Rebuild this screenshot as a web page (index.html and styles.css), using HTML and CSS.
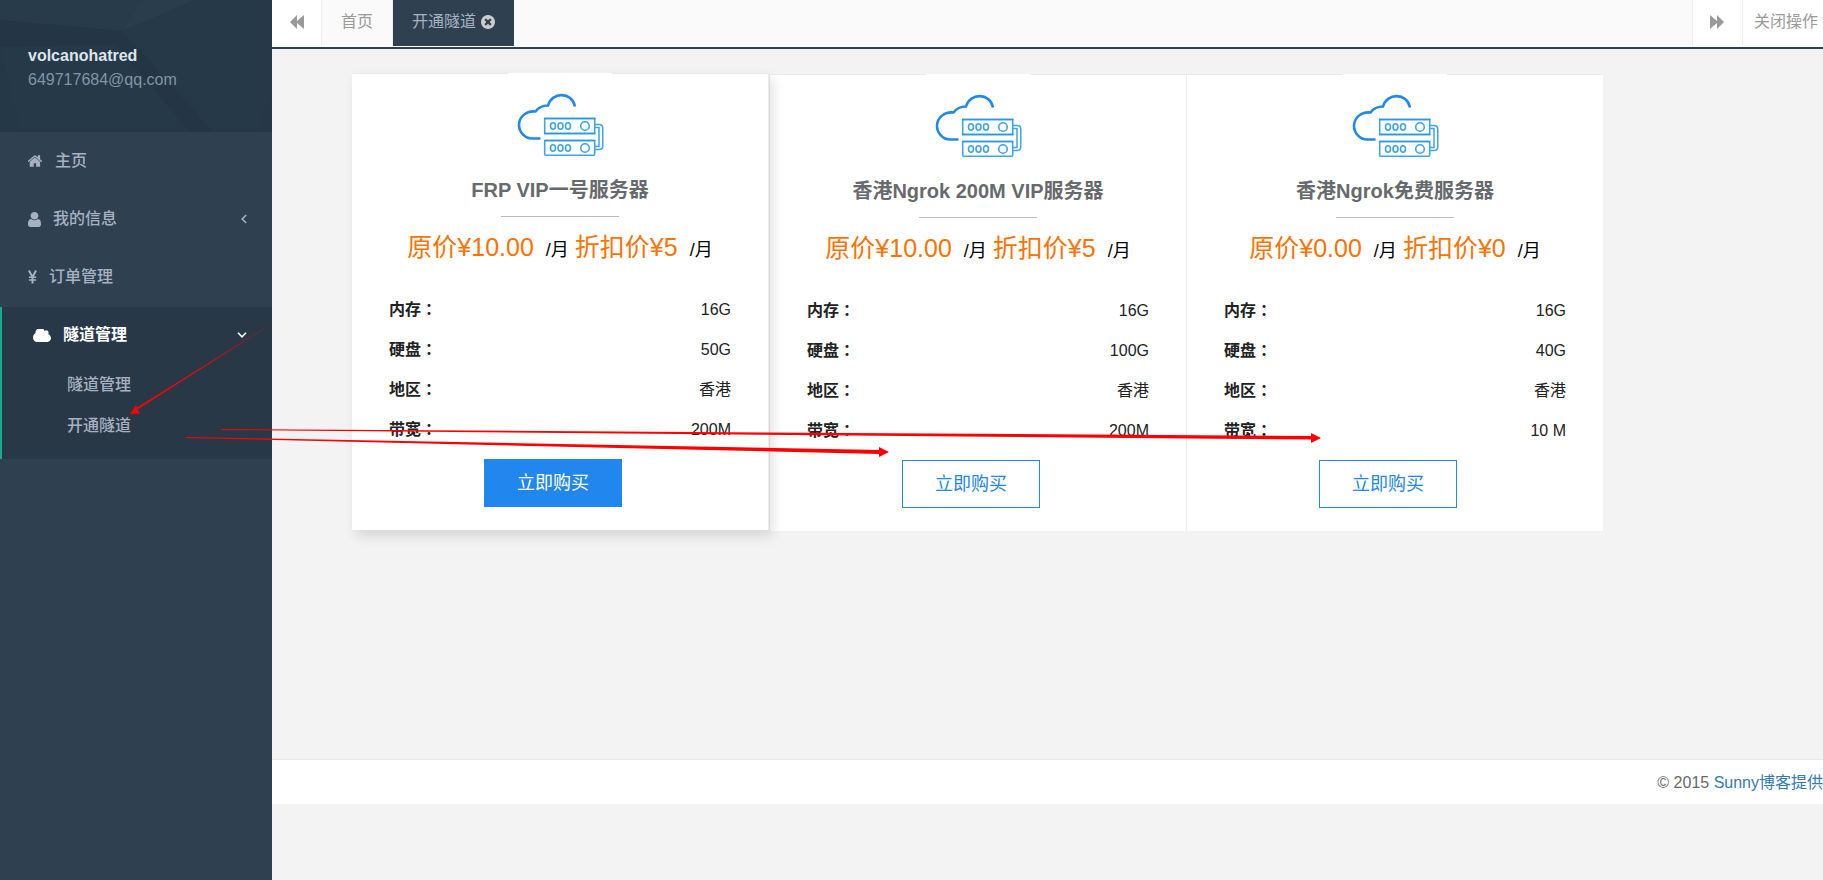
FILE: index.html
```html
<!DOCTYPE html>
<html lang="zh-CN">
<head>
<meta charset="utf-8">
<title>开通隧道</title>
<link rel="stylesheet" href="styles.css">
</head>
<body>
<svg class="defs" aria-hidden="true">
  <symbol id="server" viewBox="9 -12 104 90">
    <g fill="none" stroke="#2189ec" stroke-width="2.6" stroke-linecap="round">
      <path d="M76 21.500C73 6.500 53 6.500 49 20.500Q41 20.500 36.500 26.500C27 25.500 20 32 20 40C20 47 26 53.500 33 53.500H41.500" stroke-linecap="butt"/>
    </g>
    <g fill="none" stroke="#3fa4e8" stroke-width="1.600">
      <rect x="45.700" y="33.500" width="50" height="15"/>
      <rect x="45.700" y="55.500" width="50" height="14.700" rx="1"/>
      <path d="M45 33.500H96.500M45 48.500H96.500M45 55.500H96.500" stroke="#2b97e4"/>
      <ellipse cx="54" cy="41" rx="2.500" ry="3.200"/><ellipse cx="61.500" cy="41" rx="2.500" ry="3.200"/><ellipse cx="69" cy="41" rx="2.500" ry="3.200"/>
      <circle cx="86" cy="41" r="4.300"/>
      <ellipse cx="54" cy="63" rx="2.500" ry="3.200"/><ellipse cx="61.500" cy="63" rx="2.500" ry="3.200"/><ellipse cx="69" cy="63" rx="2.500" ry="3.200"/>
      <circle cx="86" cy="63" r="4.300"/>
      <path d="M96 39.500H100Q103.800 39.500 103.800 43V61Q103.800 64.500 100 64.500H96M96 42.500H100V61.500H96" stroke-width="1.500"/>
    </g>
  </symbol>
</svg>
<div class="app">
  <aside class="sidebar">
    <header class="profile">
      <svg class="profile-bg" viewBox="0 0 272 132" preserveAspectRatio="none" aria-hidden="true">
        <path fill="#283b4a" d="M0 0H143L122 31L0 20Z"/>
        <path fill="#293d4c" d="M143 0H195L122 31Z"/>
        <path fill="#243645" d="M0 20L122 31L140 50L213 132H190L148 82L115 45L0 47Z"/>
        <path fill="#253847" d="M0 47L22 132H0Z"/>
        <path fill="#253847" d="M272 95L256 132H272Z"/>
      </svg>
      <strong class="profile-name">volcanohatred</strong>
      <span class="profile-mail">649717684@qq.com</span>
    </header>
    <nav>
      <a class="nav-link" href="#"><svg width="15" height="14" viewBox="64 190 1664 1400" fill="currentColor"><path d="M1408 992v480q0 26-19 45t-45 19h-384v-384h-256v384h-384q-26 0-45-19t-19-45v-480q0-1 .5-3t.5-3l575-474 575 474q1 2 1 6zm223-69l-62 74q-8 9-21 11h-3q-13 0-21-7l-692-577-692 577q-12 8-24 7-13-2-21-11l-62-74q-8-10-7-23.500t11-21.500l719-599q32-26 76-26t76 26l244 204v-195q0-14 9-23t23-9h192q14 0 23 9t9 23v408l219 182q10 8 11 21.500t-7 23.500z"/></svg>主页</a>
      <a class="nav-link" href="#"><svg width="13" height="15" viewBox="256 128 1280 1536" preserveAspectRatio="none" fill="currentColor"><path d="M1536 1399q0 109-62.500 187t-150.500 78h-854q-88 0-150.500-78t-62.500-187q0-85 8.500-160.500t31.500-152 58.500-131 94-89 134.500-34.500q131 128 313 128t313-128q76 0 134.500 34.500t94 89 58.500 131 31.500 152 8.500 160.500zm-256-887q0 159-112.500 271.500t-271.500 112.500-271.500-112.500-112.500-271.500 112.500-271.500 271.500-112.500 271.500 112.500 112.500 271.500z"/></svg>我的信息<svg class="chevron" width="6" height="10" viewBox="0 0 6 10" fill="none" stroke="currentColor" stroke-width="1.600"><path d="M5.200 1L1.200 5L5.200 9"/></svg></a>
      <a class="nav-link" href="#"><svg width="9" height="14" viewBox="0 0 10 14" preserveAspectRatio="none" fill="none" stroke="currentColor" stroke-width="2.200"><path d="M1 .5L5 7L9 .5M5 6.500V13.500"/><path d="M1 7.300H9M1 9.900H9" stroke-width="1.500"/></svg>订单管理</a>
      <div class="nav-group">
        <a class="nav-link nav-link-active" href="#"><svg width="18" height="13" viewBox="64 256 1920 1280" preserveAspectRatio="none" fill="currentColor"><path d="M1984 1152q0 159-112.500 271.500t-271.500 112.500h-1088q-185 0-316.500-131.500t-131.500-316.500q0-132 71-241.500t187-163.500q-2-28-2-43 0-212 150-362t362-150q158 0 286.500 88t187.500 230q70-62 166-62 106 0 181 75t75 181q0 75-41 138 129 30 213 134.500t84 239.500z"/></svg>隧道管理<svg class="chevron" width="10" height="6" viewBox="0 0 10 6" fill="none" stroke="currentColor" stroke-width="1.600"><path d="M1 .8L5 4.800L9 .8"/></svg></a>
        <a class="sub-link" href="#">隧道管理</a>
        <a class="sub-link" href="#">开通隧道</a>
      </div>
    </nav>
  </aside>
  <main class="main">
    <div class="tabs">
      <button class="roll roll-left" type="button" aria-label="向左"><svg width="15" height="14" viewBox="0 0 15 14" fill="currentColor"><path d="M0 7L7 0V6L14 0V14L7 8V14Z"/></svg></button>
      <div class="tab-list">
        <a class="tab" href="#">首页</a>
        <a class="tab tab-active" href="#">开通隧道<svg width="14" height="14" viewBox="128 128 1536 1536" fill="#ccc"><path d="M1277 1122q0-26-19-45l-181-181 181-181q19-19 19-45 0-27-19-46l-90-90q-19-19-46-19-26 0-45 19l-181 181-181-181q-19-19-45-19-27 0-46 19l-90 90q-19 19-19 46 0 26 19 45l181 181-181 181q-19 19-19 45 0 27 19 46l90 90q19 19 46 19 26 0 45-19l181-181 181 181q19 19 45 19 27 0 46-19l90-90q19-19 19-46zm387-226q0 209-103 385.500t-279.500 279.500-385.500 103-385.500-103-279.500-279.500-103-385.500 103-385.500 279.500-279.500 385.500-103 385.500 103 279.500 279.500 103 385.500z"/></svg></a>
      </div>
      <button class="roll roll-right" type="button" aria-label="向右"><svg width="15" height="14" viewBox="0 0 15 14" fill="currentColor"><path d="M14 7L7 0V6L0 0V14L7 8V14Z"/></svg></button>
      <button class="roll close-menu" type="button">关闭操作<svg width="8" height="5" viewBox="0 0 8 5" fill="currentColor"><path d="M0 0H8L4 5Z"/></svg></button>
    </div>
    <div class="content">
      <section class="plans">
        <article class="plan plan-active">
          <svg class="plan-icon"><use href="#server"/></svg>
          <h2 class="plan-title">FRP VIP一号服务器</h2>
          <hr class="plan-rule">
          <p class="plan-price"><span class="amount">原价¥10.00</span><span class="unit">/月</span><span class="amount">折扣价¥5</span><span class="unit">/月</span></p>
          <dl class="specs">
            <div class="spec"><dt>内存<span class="colon" lang="zh-TW">：</span></dt><dd>16G</dd></div>
            <div class="spec"><dt>硬盘<span class="colon" lang="zh-TW">：</span></dt><dd>50G</dd></div>
            <div class="spec"><dt>地区<span class="colon" lang="zh-TW">：</span></dt><dd>香港</dd></div>
            <div class="spec"><dt>带宽<span class="colon" lang="zh-TW">：</span></dt><dd>200M</dd></div>
          </dl>
          <button class="buy" type="button">立即购买</button>
        </article>
        <article class="plan">
          <svg class="plan-icon"><use href="#server"/></svg>
          <h2 class="plan-title">香港Ngrok 200M VIP服务器</h2>
          <hr class="plan-rule">
          <p class="plan-price"><span class="amount">原价¥10.00</span><span class="unit">/月</span><span class="amount">折扣价¥5</span><span class="unit">/月</span></p>
          <dl class="specs">
            <div class="spec"><dt>内存<span class="colon" lang="zh-TW">：</span></dt><dd>16G</dd></div>
            <div class="spec"><dt>硬盘<span class="colon" lang="zh-TW">：</span></dt><dd>100G</dd></div>
            <div class="spec"><dt>地区<span class="colon" lang="zh-TW">：</span></dt><dd>香港</dd></div>
            <div class="spec"><dt>带宽<span class="colon" lang="zh-TW">：</span></dt><dd>200M</dd></div>
          </dl>
          <button class="buy" type="button">立即购买</button>
        </article>
        <article class="plan">
          <svg class="plan-icon"><use href="#server"/></svg>
          <h2 class="plan-title">香港Ngrok免费服务器</h2>
          <hr class="plan-rule">
          <p class="plan-price"><span class="amount">原价¥0.00</span><span class="unit">/月</span><span class="amount">折扣价¥0</span><span class="unit">/月</span></p>
          <dl class="specs">
            <div class="spec"><dt>内存<span class="colon" lang="zh-TW">：</span></dt><dd>16G</dd></div>
            <div class="spec"><dt>硬盘<span class="colon" lang="zh-TW">：</span></dt><dd>40G</dd></div>
            <div class="spec"><dt>地区<span class="colon" lang="zh-TW">：</span></dt><dd>香港</dd></div>
            <div class="spec"><dt>带宽<span class="colon" lang="zh-TW">：</span></dt><dd>10 M</dd></div>
          </dl>
          <button class="buy" type="button">立即购买</button>
        </article>
      </section>
    </div>
    <footer class="footer">© 2015 <a href="#">Sunny博客提供</a></footer>
  </main>
</div>
<svg class="arrows" width="1823" height="880" viewBox="0 0 1823 880" fill="#f00" aria-hidden="true">
  <path d="M273 323L137.500 409.500L140 413.500L130 414L136 405L137 407.500Z"/>
  <path d="M186 437L879 450V447L889 452L879 457V454L186 438Z"/>
  <path d="M221 429L1311 436V433L1321 438L1311 443V439.500L221 430Z"/>
</svg>
</body>
</html>
```
FILE: styles.css
```css
* { box-sizing: border-box; }
body {
  margin: 0;
  overflow: hidden;
  background: #2f4050;
  color: #676a6c;
  font: 16px/24px "Liberation Sans", "Noto Sans CJK SC", sans-serif;
}
a { text-decoration: none; }
svg { display: block; flex: none; }
.defs { position: absolute; width: 0; height: 0; }
.app { display: flex; min-height: 100vh; }

.sidebar { flex: none; width: 272px; background: #2f4050; }
.profile {
  position: relative;
  display: flex;
  flex-direction: column;
  padding: 44px 28px 40px;
  background: #263948;
}
.profile-bg { position: absolute; inset: 0; width: 100%; height: 100%; }
.profile-name { position: relative; color: #dfe4ed; }
.profile-mail { position: relative; color: #8095a8; }
.nav-link {
  display: flex;
  align-items: center;
  gap: 12px;
  height: 58px;
  padding: 0 25px 0 28px;
  color: #a7b1c2;
  font-weight: 500;
}
.chevron { margin-left: auto; }
.nav-group {
  margin-top: 1px;
  padding-bottom: 12px;
  border-left: 2px solid #19aa8d;
  background: #293846;
}
.nav-link-active { height: 56px; margin-bottom: 2px; padding-left: 31px; color: #fff; font-weight: 700; }
.sub-link {
  display: block;
  padding: 8px 0 9px 65px;
  color: #a7b1c2;
  font-weight: 500;
}

.main { display: flex; flex: 1; flex-direction: column; min-width: 0; padding-bottom: 76px; background: #f3f3f3; }
.tabs {
  display: flex;
  height: 49px;
  padding-bottom: 1px;
  border-bottom: 2px solid #2f4050;
  background: #fff;
}
.tab-list { display: flex; flex: 1; background: #fafafa; }
.roll {
  display: flex;
  flex: none;
  align-items: center;
  width: 50px;
  padding: 0 0 3px;
  border: 0;
  background: #fff;
  color: #999;
  font: inherit;
}
.roll-left { padding-left: 18px; border-right: 1px solid #eee; }
.roll-right { padding-left: 17px; border-left: 1px solid #eee; }
.close-menu { gap: 4px; width: 81px; padding-left: 11px; border-left: 1px solid #eee; overflow: hidden; white-space: nowrap; }
.tab {
  display: flex;
  align-items: center;
  gap: 5px;
  padding: 0 19px 2px;
  border-right: 1px solid #eee;
  color: #999;
}
.tab-active { border: 0; background: #2f4050; color: #a7b1c2; }

.content { flex: 1; padding: 25px 220px 25px 80px; }
.plans { display: grid; grid-template-columns: repeat(3, 1fr); }
.plan {
  display: flex;
  flex-direction: column;
  align-items: center;
  padding: 0 37px 23px;
  border: 1px solid #ebebeb;
  border-width: 1px 0 0 1px;
  background: #fff;
}
.plan-active {
  z-index: 1;
  border-width: 1px 1px 0 0;
  transform: translateY(-1px);
  box-shadow: 4px 6px 12px rgba(0, 0, 0, .12);
}
.plan-icon { width: 104px; height: 90px; margin-top: -1px; background: #fff; }
.plan-title { margin: 13px 0 12px; font-size: 20px; line-height: 28px; }
.plan-rule { width: 118px; height: 1px; margin: 0 0 12px; border: 0; background: #bbb; }
.plan-price { height: 36px; margin: 0 0 25px; color: #000; font-size: 25px; line-height: 36px; white-space: nowrap; }
.amount { color: #ff7200; }
.unit { margin: 0 6px 0 12px; font-size: 18px; }
.unit:last-child { margin-right: 0; }
.specs { width: 100%; margin: 0; color: #222; line-height: 40px; }
.spec { display: flex; justify-content: space-between; height: 40px; }
.spec dt { font-weight: 700; }
.spec dd { margin: 0; }
.colon { font-family: "Noto Sans CJK TC", sans-serif; line-height: 1; }
.buy {
  width: 138px;
  height: 48px;
  margin: 9px 14px 0 0;
  padding: 0;
  border: 1px solid #2186ed;
  background: #fff;
  color: #2186ed;
  font: inherit;
  font-size: 18px;
}
.plan-active .buy { background: #2186ed; color: #fff; }

.footer {
  padding: 11px 0 9px;
  border-top: 1px solid #e7eaec;
  background: #fff;
  text-align: right;
  white-space: nowrap;
}
.footer a { color: #337ab7; }
.arrows { position: absolute; z-index: 2; top: 0; left: 0; pointer-events: none; }
```
